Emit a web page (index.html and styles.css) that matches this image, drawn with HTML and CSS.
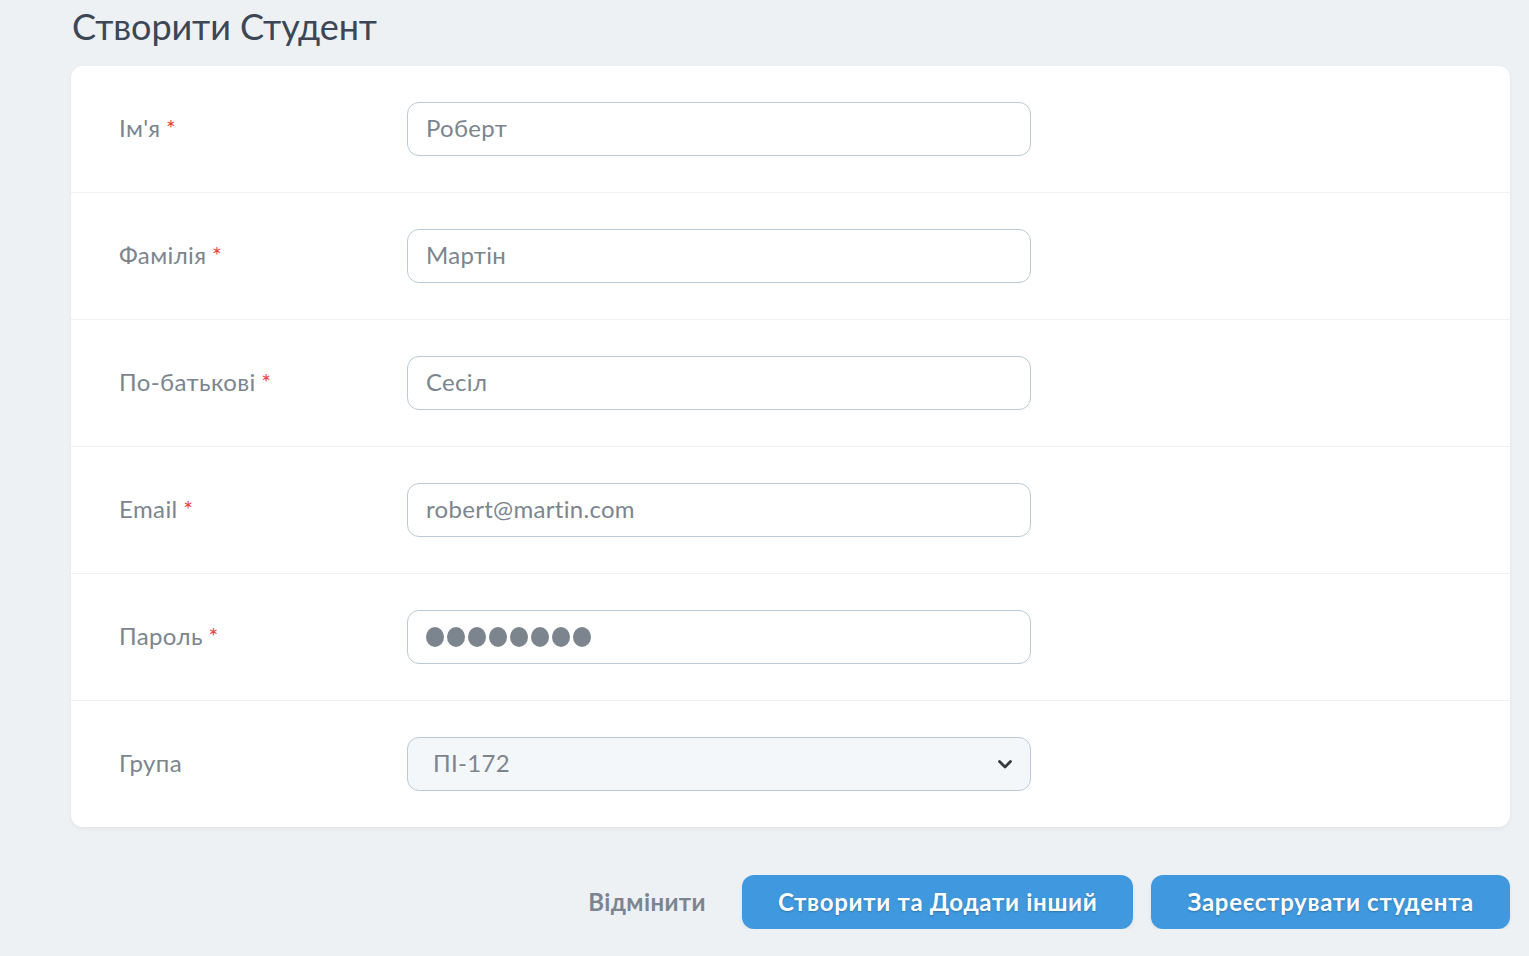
FILE: index.html
```html
<!DOCTYPE html>
<html lang="uk">
<head>
<meta charset="utf-8">
<title>Створити Студент</title>
<link rel="stylesheet" href="styles.css">
</head>
<body>
<main class="page">
  <h1 class="title">Створити Студент</h1>
  <form class="card">
    <div class="row">
      <label class="label">Ім'я <span class="req">*</span></label>
      <div class="field"><input class="input" type="text" value="Роберт"></div>
    </div>
    <div class="row">
      <label class="label">Фамілія <span class="req">*</span></label>
      <div class="field"><input class="input" type="text" value="Мартін"></div>
    </div>
    <div class="row">
      <label class="label">По-батькові <span class="req">*</span></label>
      <div class="field"><input class="input" type="text" value="Сесіл"></div>
    </div>
    <div class="row">
      <label class="label">Email <span class="req">*</span></label>
      <div class="field"><input class="input" type="text" value="robert@martin.com"></div>
    </div>
    <div class="row">
      <label class="label">Пароль <span class="req">*</span></label>
      <div class="field">
        <div class="input password" role="textbox" aria-label="Пароль">
          <span class="dot"></span><span class="dot"></span><span class="dot"></span><span class="dot"></span><span class="dot"></span><span class="dot"></span><span class="dot"></span><span class="dot"></span>
        </div>
      </div>
    </div>
    <div class="row">
      <label class="label">Група</label>
      <div class="field">
        <div class="input select">
          <span class="select-value">ПІ-172</span>
          <svg class="chevron" width="16" height="12" viewBox="0 0 16 12" aria-hidden="true"><path d="M2.5 3.5 L8 9 L13.5 3.5" fill="none" stroke="#35393c" stroke-width="2.8" stroke-linecap="round" stroke-linejoin="round"/></svg>
        </div>
      </div>
    </div>
  </form>
  <div class="actions">
    <a class="cancel">Відмінити</a>
    <button class="btn" type="button">Створити та Додати інший</button>
    <button class="btn" type="button">Зареєструвати студента</button>
  </div>
</main>
</body>
</html>
```
FILE: styles.css
```css
html, body {
  margin: 0;
  padding: 0;
  background: #eef1f4;
  font-family: "Lato", "Noto Sans", sans-serif;
}
.page {
  width: 1439px;
  padding-left: 71px;
}
.title {
  margin: 0 0 16px 1px;
  padding-top: 2px;
  height: 48px;
  line-height: 48px;
  font-size: 36px;
  font-weight: 400;
  color: #3c4655;
  letter-spacing: -0.1px;
}
.card {
  display: block;
  margin: 0;
  background: #ffffff;
  border-radius: 12px;
  box-shadow: 0 2px 4px rgba(0, 0, 0, 0.05);
}
.row {
  display: flex;
  align-items: center;
  border-bottom: 1px solid #eef1f4;
}
.row:last-child {
  border-bottom: none;
}
.label {
  box-sizing: border-box;
  width: 288px;
  padding: 0 48px 4px;
  font-size: 24px;
  color: #7c858e;
  letter-spacing: 0.4px;
}
.req {
  color: #e74444;
  font-size: 23px;
  margin-left: -1px;
}
.field {
  box-sizing: border-box;
  width: 719.5px;
  padding: 36px 48px;
}
.input {
  box-sizing: border-box;
  display: flex;
  align-items: center;
  width: 100%;
  height: 54px;
  padding: 0 18px 4px;
  border: 1px solid #bacad6;
  border-radius: 12px;
  background: #ffffff;
  font-family: "Lato", "Noto Sans", sans-serif;
  font-size: 24px;
  color: #7c858e;
  letter-spacing: 0.3px;
  outline: none;
}
.password {
  gap: 3px;
  padding: 0 18px;
}
.dot {
  display: block;
  width: 18px;
  height: 20px;
  border-radius: 50%;
  background: #7c858e;
}
.select {
  justify-content: space-between;
  padding: 0 17px 4px 25px;
  background: #f4f7fa;
}
.select-value {
  letter-spacing: 0.3px;
}
.chevron {
  display: block;
  margin-top: 4px;
}
.actions {
  display: flex;
  justify-content: flex-end;
  align-items: center;
  margin-top: 48px;
  gap: 18px;
}
.cancel {
  margin-right: 18px;
  padding-bottom: 2px;
  font-size: 24px;
  font-weight: 700;
  color: #7c858e;
  letter-spacing: 0.4px;
  cursor: pointer;
}
.btn {
  height: 54px;
  padding: 0 36px 2px;
  border: none;
  border-radius: 12px;
  background: #4099de;
  color: #ffffff;
  font-family: "Lato", "Noto Sans", sans-serif;
  font-size: 24px;
  font-weight: 700;
  letter-spacing: 0.7px;
  text-shadow: 0 1px 2px rgba(0, 0, 0, 0.25);
  box-shadow: 0 2px 4px rgba(0, 0, 0, 0.06);
  cursor: pointer;
}
```
